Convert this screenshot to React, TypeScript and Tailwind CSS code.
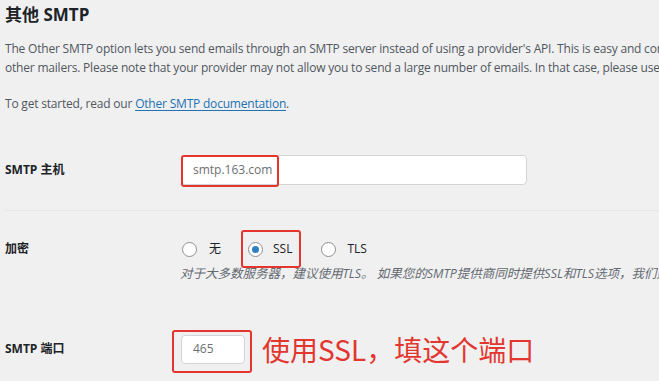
import React from "react";

const RED = "border-[#e2362f]";

const Radio = ({ checked }: { checked?: boolean }) => (
  <span className="w-[15px] h-[15px] rounded-full border border-[#8c8f94] bg-white flex items-center justify-center shrink-0">
    {checked && <span className="w-[7px] h-[7px] rounded-full bg-[#2f7fc1]" />}
  </span>
);

const App = () => {
  return (
    <div
      className="w-[659px] h-[381px] overflow-hidden bg-[#f0f0f1] text-[#3c434a] pl-[5px]"
      style={{ fontFamily: '"Open Sans", "Noto Sans CJK SC", sans-serif' }}
    >
      <h2 className="text-[17px] font-bold text-[#1d2327] pt-[4px] leading-[22px]">其他 SMTP</h2>

      <div className="mt-[13px] text-[12px] leading-[19px] whitespace-nowrap text-[#50575e] tracking-[-0.2px]">
        <p>
          The Other SMTP option lets you send emails through an SMTP server instead of using a provider's API. This is
          easy and convenient, but it's less secure than the
        </p>
        <p>
          other mailers. Please note that your provider may not allow you to send a large number of emails. In that
          case, please use a different mailer.
        </p>
        <p className="mt-[17px]">
          To get started, read our{" "}
          <span className="text-[#2271b1] underline underline-offset-2">Other SMTP documentation</span>.
        </p>
      </div>

      {/* SMTP host */}
      <div className="flex items-center mt-[41px] h-[31px]">
        <div className="w-[176px] shrink-0 text-[12px] font-bold text-[#1d2327]">SMTP 主机</div>
        <div className="relative w-[346px] h-[30px] bg-white border border-[#d4d4d4] rounded-[4px] flex items-center pl-[11px] text-[12px] text-[#6b6f74]">
          smtp.163.com
          <span className={`absolute left-[-1px] top-[-1px] w-[98px] h-[32px] border-2 ${RED} rounded-[3px]`} />
        </div>
      </div>

      <div className="mt-[25px] h-px bg-[#e6e6e6] w-[654px]" />

      {/* Encryption */}
      <div className="flex mt-[28px]">
        <div className="w-[176px] shrink-0 text-[12px] font-bold text-[#1d2327] leading-[20px]">加密</div>
        <div>
          <div className="flex items-center h-[20px] text-[12px] text-[#1d2327]">
            <div className="flex items-center gap-[12px] ml-[1px]">
              <Radio />
              <span>无</span>
            </div>
            <div className="relative flex items-center gap-[10px] ml-[27px]">
              <Radio checked />
              <span>SSL</span>
              <span className={`absolute left-[-7px] top-[-10px] w-[60px] h-[38px] border-2 ${RED} rounded-[3px]`} />
            </div>
            <div className="flex items-center gap-[11px] ml-[29px]">
              <Radio />
              <span>TLS</span>
            </div>
          </div>
          <p className="mt-[6px] -ml-[1px] text-[12.5px] italic text-[#646970] whitespace-nowrap leading-[18px]">
            对于大多数服务器，建议使用TLS。 如果您的SMTP提供商同时提供SSL和TLS选项，我们建议使用TLS。
          </p>
        </div>
      </div>

      {/* SMTP port */}
      <div className="flex items-center mt-[51px]">
        <div className="w-[176px] shrink-0 text-[12px] font-bold text-[#1d2327]">SMTP 端口</div>
        <div className="relative">
          <div className="w-[64px] h-[29px] bg-white border border-[#d4d4d4] rounded-[4px] flex items-center pl-[11px] text-[12px] text-[#6b6f74]">
            465
          </div>
          <span className={`absolute left-[-9px] top-[-5px] w-[80px] h-[43px] border-2 ${RED} rounded-[3px]`} />
        </div>
        <div
          className="ml-[17px] text-[28px] leading-[30px] text-[#e2362f]"
          style={{ fontFamily: '"Noto Sans CJK SC", sans-serif' }}
        >
          使用SSL，填这个端口
        </div>
      </div>
    </div>
  );
};

export default App;
